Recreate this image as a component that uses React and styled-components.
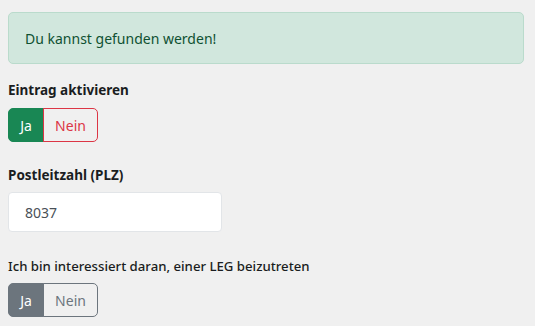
import React from "react";
import styled, { createGlobalStyle } from "styled-components";

const Global = createGlobalStyle`
  html, body { margin: 0; padding: 0; background: #f0f0f0; }
  body { font-family: "Noto Sans", "Open Sans", sans-serif; color: #212529; }
`;

const Page = styled.div`
  padding: 12px 11px 0 8px;
  display: flex;
  flex-direction: column;
`;

const Alert = styled.div`
  background: #d1e7dd;
  border: 1px solid #badbcc;
  border-radius: 5px;
  color: #0f5132;
  font-size: 14px;
  height: 52px;
  box-sizing: border-box;
  display: flex;
  align-items: center;
  padding: 0 16px;
`;

const Field = styled.div`
  display: flex;
  flex-direction: column;
  margin-top: ${(p) => p.$top}px;
`;

const Label = styled.label`
  font-size: ${(p) => p.$size}px;
  font-weight: ${(p) => p.$weight};
  line-height: 18px;
  color: #1a1d21;
  margin-bottom: ${(p) => p.$gap}px;
`;

const Group = styled.div`
  display: inline-flex;
  align-self: flex-start;
  height: 34px;
`;

const Seg = styled.button`
  font-family: inherit;
  font-size: 14px;
  height: 34px;
  box-sizing: border-box;
  padding: 0;
  width: ${(p) => p.$w}px;
  border: 1px solid ${(p) => p.$color};
  background: ${(p) => (p.$active ? p.$color : "transparent")};
  color: ${(p) => (p.$active ? "#fff" : p.$color)};
  border-radius: ${(p) => (p.$first ? "5px 0 0 5px" : "0 5px 5px 0")};
  margin-left: ${(p) => (p.$first ? 0 : -1)}px;
  display: flex;
  align-items: center;
  justify-content: center;
`;

const Input = styled.input`
  font-family: inherit;
  width: 214px;
  height: 40px;
  box-sizing: border-box;
  border: 1px solid #e2e5e8;
  border-radius: 4px;
  background: #fff;
  font-size: 14px;
  color: #495057;
  padding: 0 16px;
  outline: none;
`;

function Toggle({ color, neinColor }) {
  return (
    <Group>
      <Seg $first $active $w={36} $color={color}>Ja</Seg>
      <Seg $w={55} $color={neinColor}>Nein</Seg>
    </Group>
  );
}

export default function App() {
  return (
    <>
      <Global />
      <Page>
        <Alert>Du kannst gefunden werden!</Alert>
        <Field $top={17}>
          <Label $size={13.5} $weight={700} $gap={9}>Eintrag aktivieren</Label>
          <Toggle color="#198754" neinColor="#dc3545" />
        </Field>
        <Field $top={24}>
          <Label $size={13.5} $weight={700} $gap={8}>Postleitzahl (PLZ)</Label>
          <Input defaultValue="8037" />
        </Field>
        <Field $top={25}>
          <Label $size={13.2} $weight={500} $gap={8}>Ich bin interessiert daran, einer LEG beizutreten</Label>
          <Toggle color="#6c757d" neinColor="#6c757d" />
        </Field>
      </Page>
    </>
  );
}
